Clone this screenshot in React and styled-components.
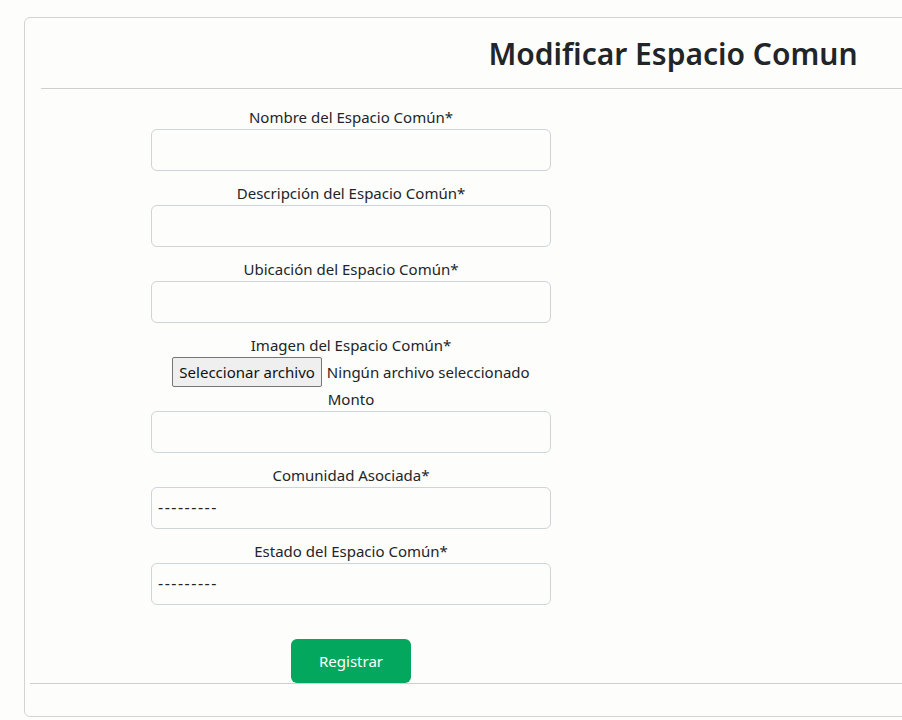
import React from 'react';
import styled, { createGlobalStyle } from 'styled-components';

const GlobalStyle = createGlobalStyle`
  html, body {
    margin: 0;
    padding: 0;
    background: #fdfdfb;
    overflow: hidden;
  }
  body {
    font-family: "Noto Sans", "Open Sans", sans-serif;
    color: #212529;
  }
`;

const Page = styled.div`
  padding: 17px 0 0 24px;
  height: 720px;
  box-sizing: border-box;
`;

const Card = styled.div`
  width: 1282px;
  height: 700px;
  box-sizing: border-box;
  border: 1px solid #d3d3d3;
  border-radius: 6px;
  background: #fdfdfb;
  display: flex;
  flex-direction: column;
`;

const CardHeader = styled.div`
  margin-left: 16px;
  height: 70px;
  border-bottom: 1px solid #cfcfcf;
  display: flex;
  align-items: center;
  justify-content: center;
`;

const Title = styled.h1`
  margin: 0;
  font-size: 30px;
  font-weight: 600;
  color: #212529;
`;

const CardBody = styled.div`
  flex: 1;
  padding: 16px 0 0 126px;
`;

const Form = styled.form`
  width: 400px;
  display: flex;
  flex-direction: column;
  align-items: center;
`;

const Group = styled.div`
  width: 100%;
  display: flex;
  flex-direction: column;
  align-items: center;
  margin-bottom: ${(p) => p.$gap ?? 10}px;
`;

const Label = styled.label`
  font-size: 15px;
  line-height: 24px;
  height: 24px;
  color: #212529;
`;

const Input = styled.input`
  width: 100%;
  height: 42px;
  box-sizing: border-box;
  border: 1px solid #ced4da;
  border-radius: 6px;
  background: #fdfdfb;
  padding: 6px 12px;
  font-size: 16px;
  font-family: inherit;
`;

const Select = styled.div`
  width: 100%;
  height: 42px;
  box-sizing: border-box;
  border: 1px solid #ced4da;
  border-radius: 6px;
  background: #fdfdfb;
  padding: 0 6px 2px;
  font-size: 16px;
  letter-spacing: 1.5px;
  display: flex;
  align-items: center;
  color: #212529;
`;

const FileRow = styled.div`
  height: 30px;
  display: flex;
  align-items: center;
  gap: 5px;
  font-size: 15px;
`;

const FileButton = styled.span`
  height: 28px;
  padding: 0 6px;
  display: inline-flex;
  align-items: center;
  border: 1px solid #767676;
  border-radius: 2px;
  background: #efefef;
  color: #111;
  font-size: 15px;
`;

const Submit = styled.button`
  width: 120px;
  height: 44px;
  margin-top: 24px;
  border: none;
  border-radius: 6px;
  background: #03a85e;
  color: #fff;
  font-size: 15px;
  font-family: inherit;
`;

const CardFooter = styled.div`
  margin-left: 5px;
  height: 32px;
  border-top: 1px solid #cfcfcf;
`;

const fields = [
  { label: 'Nombre del Espacio Común*', type: 'input' },
  { label: 'Descripción del Espacio Común*', type: 'input' },
  { label: 'Ubicación del Espacio Común*', type: 'input' },
  { label: 'Imagen del Espacio Común*', type: 'file' },
  { label: 'Monto', type: 'input' },
  { label: 'Comunidad Asociada*', type: 'select' },
  { label: 'Estado del Espacio Común*', type: 'select' },
];

const App = () => {
  return (
    <>
      <GlobalStyle />
      <Page>
        <Card>
          <CardHeader>
            <Title>Modificar Espacio Comun</Title>
          </CardHeader>
          <CardBody>
            <Form onSubmit={(e) => e.preventDefault()}>
              {fields.map((f) => (
                <Group key={f.label} $gap={f.type === 'file' ? 0 : 10}>
                  <Label>{f.label}</Label>
                  {f.type === 'input' && <Input type="text" />}
                  {f.type === 'select' && <Select>---------</Select>}
                  {f.type === 'file' && (
                    <FileRow>
                      <FileButton>Seleccionar archivo</FileButton>
                      <span>Ningún archivo seleccionado</span>
                    </FileRow>
                  )}
                </Group>
              ))}
              <Submit type="submit">Registrar</Submit>
            </Form>
          </CardBody>
          <CardFooter />
        </Card>
      </Page>
    </>
  );
};

export default App;
